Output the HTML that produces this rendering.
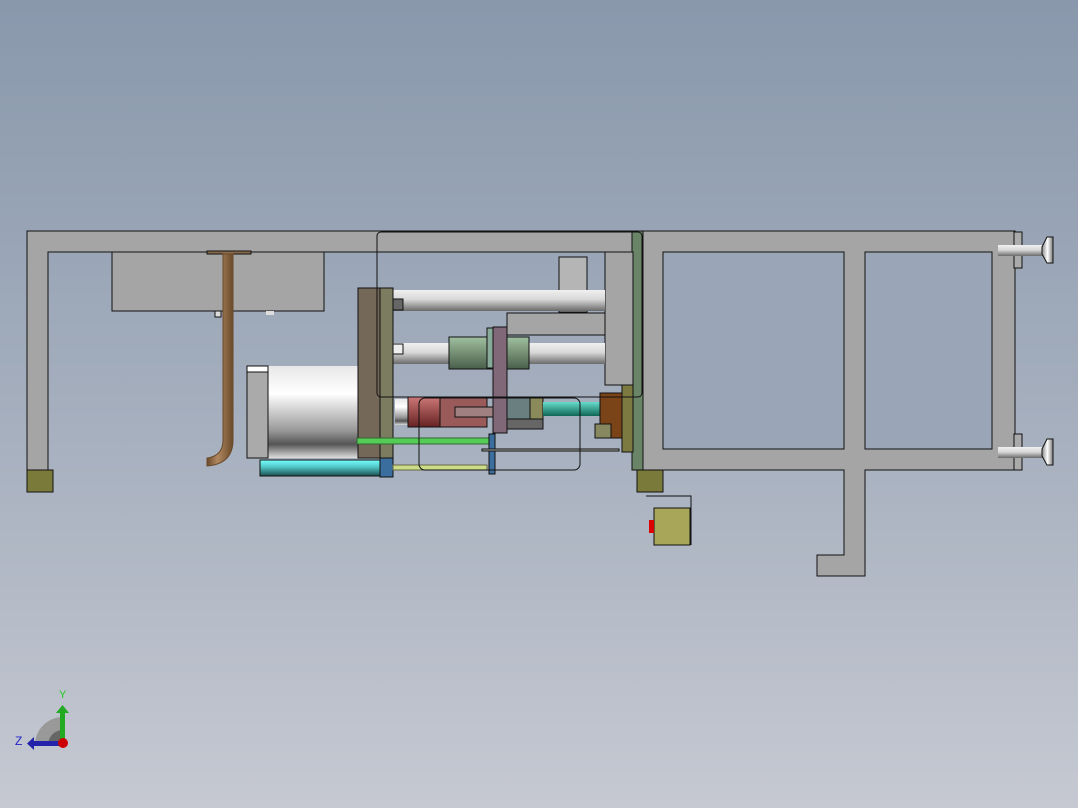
<!DOCTYPE html>
<html><head><meta charset="utf-8"><style>
html,body{margin:0;padding:0;width:1078px;height:808px;overflow:hidden}
body{background:linear-gradient(#8998ac,#a4aebd 50%,#c6c9d2)}
svg{position:absolute;left:0;top:0}
</style></head><body>
<svg width="1078" height="808" viewBox="0 0 1078 808" font-family="Liberation Sans, sans-serif">
<defs>
<linearGradient id="rod" x1="0" y1="0" x2="0" y2="1"><stop offset="0" stop-color="#f0f0f0"/><stop offset=".45" stop-color="#d8d8d8"/><stop offset="1" stop-color="#6a6a6a"/></linearGradient>
<linearGradient id="disc" x1="0" y1="0" x2="1" y2="0"><stop offset="0" stop-color="#888"/><stop offset=".5" stop-color="#fff"/><stop offset="1" stop-color="#777"/></linearGradient>
<linearGradient id="cyl" x1="0" y1="0" x2="0" y2="1"><stop offset="0" stop-color="#e8e8e8"/><stop offset=".3" stop-color="#fff"/><stop offset=".7" stop-color="#999"/><stop offset=".85" stop-color="#555"/><stop offset="1" stop-color="#ddd"/></linearGradient>
<linearGradient id="grn" x1="0" y1="0" x2="0" y2="1"><stop offset="0" stop-color="#a0c0a0"/><stop offset="1" stop-color="#4a5e4a"/></linearGradient>
<linearGradient id="cyan" x1="0" y1="0" x2="0" y2="1"><stop offset="0" stop-color="#7ff"/><stop offset=".4" stop-color="#5cc"/><stop offset="1" stop-color="#1a5050"/></linearGradient>
<linearGradient id="teal" x1="0" y1="0" x2="0" y2="1"><stop offset="0" stop-color="#6dc"/><stop offset="1" stop-color="#165"/></linearGradient>
<linearGradient id="red" x1="0" y1="0" x2="0" y2="1"><stop offset="0" stop-color="#c77"/><stop offset="1" stop-color="#622"/></linearGradient>
<linearGradient id="pipe" x1="0" y1="0" x2="1" y2="0"><stop offset="0" stop-color="#6a4a2a"/><stop offset=".4" stop-color="#b08860"/><stop offset="1" stop-color="#6a4a2a"/></linearGradient>
</defs>
<g stroke="#111" stroke-width="1">
<path d="M27 231H643V252H48V490H27Z" fill="#a5a5a5"/>
<rect x="27" y="470" width="26" height="22" fill="#7a7a3a"/>
<rect x="112" y="252" width="212" height="59" fill="#a5a5a5"/>
<rect x="215" y="311" width="6" height="6" fill="#ddd"/>
<rect x="266" y="311" width="8" height="4" fill="#ddd" stroke="none"/>
<rect x="207" y="251" width="44" height="3" fill="#8a6a4a"/>
<path d="M223 254H233V440Q233 464 207 466V458Q223 456 223 440Z" fill="url(#pipe)" stroke="#6a4a2a"/>
<path d="M643 231H1015V470H865V576H817V555H844V470H643Z" fill="#a5a5a5"/>
<rect x="663" y="252" width="181" height="197" fill="#9aa6b8"/>
<rect x="865" y="252" width="127" height="197" fill="#9aa6b8"/>
<rect x="632" y="231" width="11" height="239" fill="#6a8468"/>
<rect x="1014" y="232" width="8" height="36" fill="#aaa"/>
<rect x="998" y="245" width="46" height="11" fill="url(#rod)" stroke="none"/>
<path d="M1042 247L1047 237H1053V263H1047L1042 254Z" fill="url(#disc)"/>
<rect x="1014" y="434" width="8" height="36" fill="#aaa"/>
<rect x="998" y="447" width="46" height="11" fill="url(#rod)" stroke="none"/>
<path d="M1042 449L1047 439H1053V465H1047L1042 456Z" fill="url(#disc)"/>
<rect x="637" y="470" width="26" height="22" fill="#7a7a3a"/>
<path d="M646 496H691V545" fill="none"/>
<rect x="654" y="508" width="36" height="37" fill="#a8a658"/>
<rect x="649" y="520" width="5" height="13" fill="#d00" stroke="none"/>
<rect x="559" y="257" width="28" height="55" fill="#b5b5b5"/>
<rect x="605" y="252" width="28" height="133" fill="#a5a5a5"/>
<rect x="393" y="290" width="212" height="21" fill="url(#rod)" stroke="none"/>
<rect x="507" y="313" width="98" height="22" fill="#a5a5a5"/>
<rect x="393" y="343" width="212" height="21" fill="url(#rod)" stroke="none"/>
<rect x="393" y="299" width="10" height="11" fill="#666"/>
<rect x="393" y="344" width="10" height="10" fill="#eee"/>
<rect x="449" y="337" width="80" height="32" fill="url(#grn)"/>
<rect x="487" y="328" width="7" height="40" fill="#8a9" />
<rect x="247" y="366" width="111" height="92" fill="url(#cyl)" stroke="none"/>
<rect x="247" y="366" width="21" height="92" fill="#aaa"/>
<rect x="247" y="366" width="21" height="6" fill="#fff"/>
<rect x="358" y="288" width="22" height="170" fill="#746858"/>
<rect x="380" y="288" width="13" height="189" fill="#7c7c60"/>
<rect x="380" y="458" width="13" height="19" fill="#3a6e9e"/>
<rect x="357" y="438" width="133" height="6" fill="#5c5" stroke="#363"/>
<rect x="260" y="460" width="120" height="16" fill="url(#cyan)"/>
<rect x="393" y="465" width="94" height="5" fill="#cd8" stroke="#664"/>
<rect x="395" y="399" width="13" height="26" fill="url(#cyl)" stroke="none"/>
<rect x="408" y="397" width="32" height="30" fill="url(#red)"/>
<rect x="440" y="397" width="47" height="30" fill="#9a5a5a"/>
<rect x="455" y="407" width="38" height="10" fill="#a08080"/>
<rect x="507" y="398" width="36" height="21" fill="#6a8080"/>
<rect x="530" y="398" width="13" height="21" fill="#8a8a5a"/>
<rect x="507" y="419" width="36" height="10" fill="#666"/>
<rect x="543" y="402" width="57" height="14" fill="url(#teal)" stroke="none"/>
<rect x="600" y="393" width="22" height="45" fill="#7a4418"/>
<rect x="622" y="385" width="11" height="67" fill="#7c7a40"/>
<rect x="595" y="424" width="16" height="14" fill="#888860"/>
<rect x="493" y="327" width="14" height="106" fill="#806878"/>
<rect x="489" y="434" width="6" height="40" fill="#3a6e9e"/>
<rect x="482" y="449" width="137" height="2" fill="#aaa"/>
<rect x="377" y="232" width="265" height="165" rx="4" fill="none"/>
<rect x="419" y="398" width="161" height="72" rx="6" fill="none"/>
</g>
<path d="M35 745A28 28 0 0 1 63 717V745Z" fill="#999"/>
<path d="M48 745A15 15 0 0 1 63 730V745Z" fill="#666"/>
<rect x="60" y="712" width="5" height="32" fill="#2a2"/>
<path d="M56 713L62.5 705L69 713Z" fill="#2a2"/>
<rect x="33" y="741" width="30" height="5" fill="#22a"/>
<path d="M34 737L27 743.5L34 750Z" fill="#22a"/>
<circle cx="63" cy="743" r="5" fill="#c00"/>
<text x="59" y="698" font-size="11" fill="#2c2">Y</text>
<text x="15" y="745" font-size="12" fill="#22c">Z</text>
</svg>
</body></html>
